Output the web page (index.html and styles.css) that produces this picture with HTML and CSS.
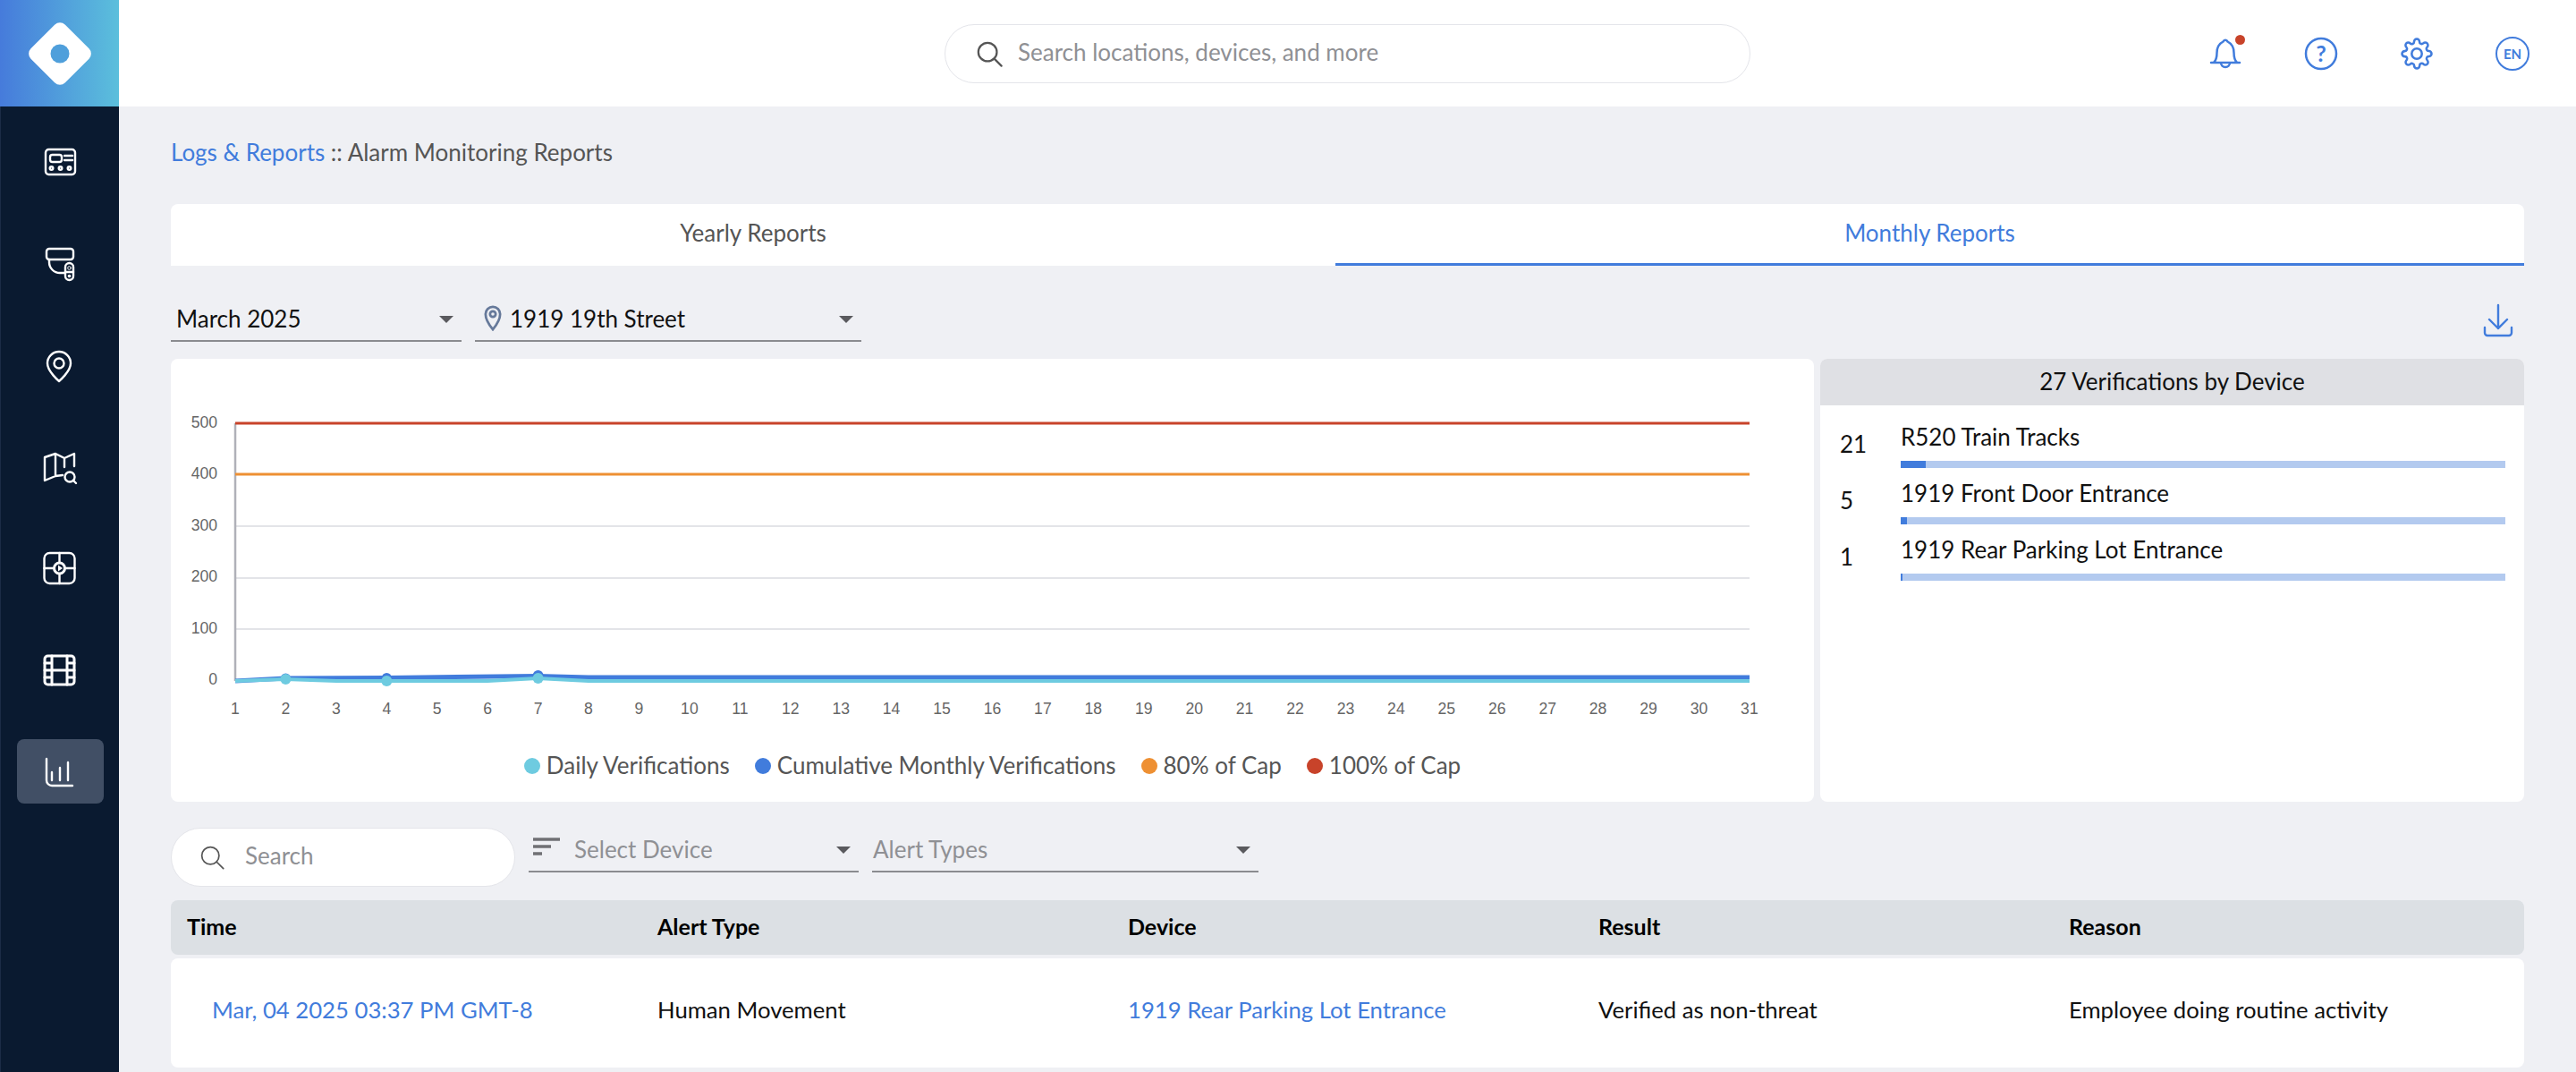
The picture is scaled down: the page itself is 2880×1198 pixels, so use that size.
FILE: index.html
```html
<!DOCTYPE html>
<html lang="en">
<head>
<meta charset="utf-8">
<title>Alarm Monitoring Reports</title>
<link rel="stylesheet" href="styles.css">
</head>
<body>
<div class="app">
  <aside class="sidebar">
    <div class="logo">
      <svg class="logo-mark" viewBox="0 0 80 80"><rect x="13" y="13" width="54" height="54" rx="8" transform="rotate(45 40 40)" fill="#fff"/><circle cx="40" cy="40" r="10.5" fill="#4f9fdb"/></svg>
    </div>
    <nav class="nav">
      <a class="nav-item"><svg class="ico" viewBox="0 0 48 48"><rect x="8" y="9" width="33" height="28" rx="3.5"/><rect x="13" y="15" width="13" height="8" rx="2.5"/><path d="M29 16h9M29 21h9"/><circle cx="14.500" cy="30" r="1.800"/><circle cx="24.500" cy="30" r="1.800"/><circle cx="34.500" cy="30" r="1.800"/></svg></a>
      <a class="nav-item"><svg class="ico" viewBox="0 0 48 48"><rect x="9" y="7" width="30" height="12" rx="3"/><path d="M12 19v3a12 12 0 0 0 12 12h5"/><rect x="30" y="23" width="9" height="19" rx="4.500"/><path d="M30 33h9"/><circle class="thin" cx="34.500" cy="28.500" r="1.800"/><circle class="solid" cx="34.500" cy="37.500" r="1.800"/></svg></a>
      <a class="nav-item"><svg class="ico" viewBox="0 0 48 48"><path d="M23 41C23 41 10 30 10 21a13 13 0 0 1 26 0C36 30 23 41 23 41Z"/><circle cx="23" cy="21" r="5.500"/></svg></a>
      <a class="nav-item"><svg class="ico" viewBox="0 0 48 48"><path d="M27 33l-8 1-12 5V13l12-4 10 5 11-5v14M19 9v25M29 14v10"/><circle cx="35" cy="35" r="5.500"/><path d="M39 39l3 3"/></svg></a>
      <a class="nav-item"><svg class="ico" viewBox="0 0 48 48"><rect x="6.500" y="7" width="34" height="34" rx="6"/><path d="M23.500 7v34M6.500 24h34"/><circle class="disc" cx="23.500" cy="24" r="6"/><path class="solid" d="M22 20.500l5 3.500-5 3.500Z"/></svg></a>
      <a class="nav-item"><svg class="ico film" viewBox="0 0 48 48"><rect x="7" y="9" width="33" height="32" rx="3.500"/><path d="M15 9v32M32 9v32M7 17h8M7 25h33M7 33h8M32 17h8M32 33h8"/></svg></a>
      <a class="nav-item active"><svg class="ico" viewBox="0 0 48 48"><path d="M9 10v24a6 6 0 0 0 6 6h23M15 25v9M24 20v14M33 14v20"/></svg></a>
    </nav>
  </aside>
  <main class="main">
    <header class="topbar">
      <div></div>
      <label class="global-search">
        <svg class="search-ico" viewBox="0 0 32 32"><circle cx="14" cy="14" r="11"/><path d="M22 22l8.500 8.500"/></svg>
        <span class="placeholder">Search locations, devices, and more</span>
      </label>
      <div class="top-actions">
        <span class="top-ico">
          <svg viewBox="0 0 48 48"><path d="M8 34h32M11 34c3-3 3.500-6 3.500-11 0-6 3-10.500 7-12.500 1-2.500 4-2.500 5 0 4 2 7 6.500 7 12.500 0 5 .5 8 3.500 11M19 34a5 5 0 0 0 10 0"/></svg>
          <i class="badge"></i>
        </span>
        <span class="top-ico">
          <svg viewBox="0 0 48 48"><circle cx="24" cy="24" r="17"/><text x="24" y="33" text-anchor="middle" class="q">?</text></svg>
        </span>
        <span class="top-ico">
          <svg viewBox="0 0 24 24" class="gear"><circle cx="12" cy="12" r="3.800"/><path d="M19.400 15a1.650 1.650 0 0 0 .33 1.820l.06.06a2 2 0 0 1 0 2.830 2 2 0 0 1-2.830 0l-.06-.06a1.650 1.650 0 0 0-1.820-.33 1.650 1.650 0 0 0-1 1.510V21a2 2 0 0 1-2 2 2 2 0 0 1-2-2v-.09A1.650 1.650 0 0 0 9 19.400a1.650 1.650 0 0 0-1.820.33l-.06.06a2 2 0 0 1-2.830 0 2 2 0 0 1 0-2.830l.06-.06a1.650 1.650 0 0 0 .33-1.820 1.650 1.650 0 0 0-1.510-1H3a2 2 0 0 1-2-2 2 2 0 0 1 2-2h.09A1.650 1.650 0 0 0 4.600 9a1.650 1.650 0 0 0-.33-1.820l-.06-.06a2 2 0 0 1 0-2.830 2 2 0 0 1 2.830 0l.06.06a1.650 1.650 0 0 0 1.820.33H9a1.650 1.650 0 0 0 1-1.510V3a2 2 0 0 1 2-2 2 2 0 0 1 2 2v.09a1.650 1.650 0 0 0 1 1.510 1.650 1.650 0 0 0 1.820-.33l.06-.06a2 2 0 0 1 2.830 0 2 2 0 0 1 0 2.830l-.06.06a1.650 1.650 0 0 0-.33 1.820V9a1.650 1.650 0 0 0 1.510 1H21a2 2 0 0 1 2 2 2 2 0 0 1-2 2h-.09a1.650 1.650 0 0 0-1.510 1z"/></svg>
        </span>
        <span class="top-ico"><span class="lang">EN</span></span>
      </div>
    </header>

    <div class="content">
      <div class="crumbs"><a class="link">Logs &amp; Reports</a> :: Alarm Monitoring Reports</div>

      <div class="tabs">
        <div class="tab">Yearly Reports</div>
        <div class="tab current">Monthly Reports</div>
      </div>

      <div class="toolbar">
        <div class="select w325"><span>March 2025</span><i class="caret"></i></div>
        <div class="select w432">
          <svg class="pin" viewBox="0 0 24 32"><path d="M12 30C12 30 3 19 3 11a9 9 0 0 1 18 0C21 19 12 30 12 30Z"/><circle cx="12" cy="11" r="3.500"/></svg>
          <span>1919 19th Street</span><i class="caret"></i>
        </div>
        <svg class="download" viewBox="0 0 48 48"><path d="M24 7v26M14 23l10 10 10-10M9 32v6a3 3 0 0 0 3 3h24a3 3 0 0 0 3-3v-6"/></svg>
      </div>

      <div class="panels">
        <section class="chart-card">
          <svg class="chart" viewBox="191 401 1837 420">
            <g class="grid">
              <path d="M263 588H1956M263 646H1956M263 703H1956"/>
            </g>
            <path class="axis" d="M263 473V761"/>
            <path class="cap100" d="M263 473H1956"/>
            <path class="cap80" d="M263 530H1956"/>
            <path class="cum" d="M263 761L319 758 432 757.500 601 755.500 658 757H1956"/>
            <circle class="cum-dot" cx="319.400" cy="758" r="5.500"/>
            <circle class="cum-dot" cx="432.300" cy="757.500" r="5.500"/>
            <circle class="cum-dot" cx="601.600" cy="755" r="6"/>
            <path class="daily" d="M263 761L319 759 376 761H545L601 758 658 761H1956"/>
            <circle class="daily-dot" cx="319.400" cy="759" r="6"/>
            <circle class="daily-dot" cx="432.300" cy="761" r="6"/>
            <circle class="daily-dot" cx="601.600" cy="758" r="6"/>
            <g class="ylabels">
              <text x="243" y="478">500</text>
              <text x="243" y="535">400</text>
              <text x="243" y="593">300</text>
              <text x="243" y="650">200</text>
              <text x="243" y="708">100</text>
              <text x="243" y="765">0</text>
            </g>
            <g class="xlabels">
              <text x="263" y="798">1</text><text x="319.400" y="798">2</text><text x="375.900" y="798">3</text><text x="432.300" y="798">4</text><text x="488.700" y="798">5</text><text x="545.200" y="798">6</text><text x="601.600" y="798">7</text><text x="658" y="798">8</text><text x="714.400" y="798">9</text><text x="770.900" y="798">10</text><text x="827.300" y="798">11</text><text x="883.700" y="798">12</text><text x="940.200" y="798">13</text><text x="996.600" y="798">14</text><text x="1053" y="798">15</text><text x="1109.500" y="798">16</text><text x="1165.900" y="798">17</text><text x="1222.300" y="798">18</text><text x="1278.700" y="798">19</text><text x="1335.200" y="798">20</text><text x="1391.600" y="798">21</text><text x="1448" y="798">22</text><text x="1504.500" y="798">23</text><text x="1560.900" y="798">24</text><text x="1617.300" y="798">25</text><text x="1673.800" y="798">26</text><text x="1730.200" y="798">27</text><text x="1786.600" y="798">28</text><text x="1843" y="798">29</text><text x="1899.500" y="798">30</text><text x="1955.900" y="798">31</text>
            </g>
          </svg>
          <div class="legend">
            <span class="key"><i class="dot dot-daily"></i>Daily Verifications</span>
            <span class="key"><i class="dot dot-cum"></i>Cumulative Monthly Verifications</span>
            <span class="key"><i class="dot dot-80"></i>80% of Cap</span>
            <span class="key"><i class="dot dot-100"></i>100% of Cap</span>
          </div>
        </section>
        <section class="device-card">
          <h2 class="device-head">27 Verifications by Device</h2>
          <div class="device-list">
            <div class="device"><span class="count">21</span><div class="device-body"><div class="device-name">R520 Train Tracks</div><div class="bar"><i class="fill" style="width:28px"></i></div></div></div>
            <div class="device"><span class="count">5</span><div class="device-body"><div class="device-name">1919 Front Door Entrance</div><div class="bar"><i class="fill" style="width:7px"></i></div></div></div>
            <div class="device"><span class="count">1</span><div class="device-body"><div class="device-name">1919 Rear Parking Lot Entrance</div><div class="bar"><i class="fill" style="width:2px"></i></div></div></div>
          </div>
        </section>
      </div>

      <div class="filters">
        <label class="local-search">
          <svg class="search-ico small" viewBox="0 0 32 32"><circle cx="14" cy="14" r="11"/><path d="M22 22l8.500 8.500"/></svg>
          <span class="placeholder">Search</span>
        </label>
        <div class="select w369 muted">
          <svg class="sort" viewBox="0 0 30 20"><path d="M0 2h30M0 10h20M0 18h10"/></svg>
          <span>Select Device</span><i class="caret"></i>
        </div>
        <div class="select w432 muted tight"><span>Alert Types</span><i class="caret"></i></div>
      </div>

      <div class="thead">
        <div>Time</div><div>Alert Type</div><div>Device</div><div>Result</div><div>Reason</div>
      </div>
      <div class="trow">
        <div class="link indent">Mar, 04 2025 03:37 PM GMT-8</div>
        <div>Human Movement</div>
        <div class="link">1919 Rear Parking Lot Entrance</div>
        <div>Verified as non-threat</div>
        <div>Employee doing routine activity</div>
      </div>
    </div>
  </main>
</div>
</body>
</html>
```
FILE: styles.css
```css
* { box-sizing: border-box; }
html, body { margin: 0; height: 100%; }
body {
  height: 1198px;
  overflow: hidden;
  background: #eff0f4;
  font-family: "Lato", "Noto Sans", sans-serif;
  font-size: 26px;
  color: #111;
}
.app { display: flex; height: 1198px; }

/* sidebar */
.sidebar { width: 133px; flex: none; background: #0a1a30; border-left: 1px solid #1c2c46; }
.logo {
  height: 119px;
  margin-left: -1px;
  display: flex;
  align-items: center;
  justify-content: center;
  background: linear-gradient(90deg, #467bdb, #5bbfdc);
}
.logo-mark { width: 80px; height: 80px; }
.nav { display: flex; flex-direction: column; align-items: center; gap: 41.3px; padding-top: 27px; }
.nav-item { width: 97px; height: 72px; border-radius: 8px; display: flex; align-items: center; justify-content: center; }
.nav-item.active { background: #414f65; }
.ico { width: 48px; height: 48px; fill: none; stroke: #fff; stroke-width: 2.4; stroke-linecap: round; stroke-linejoin: round; }
.ico.film { stroke-width: 3; }
.ico .solid { fill: #fff; stroke: none; }
.ico .thin { stroke-width: 1; }
.ico .disc { fill: #0a1a30; stroke-width: 3; }

/* top bar */
.main { flex: 1; min-width: 0; }
.topbar {
  height: 119px;
  background: #fff;
  display: grid;
  grid-template-columns: 1fr 901px 1fr;
  align-items: center;
  padding-right: 47px;
  padding-left: 47px;
}
.global-search {
  height: 66px;
  display: flex;
  align-items: center;
  gap: 17px;
  padding-left: 34px;
  border: 1px solid #e4e5ea;
  border-radius: 33px;
  background: #fff;
}
.placeholder { color: #8f9094; padding-bottom: 3px; }
.local-search .placeholder { padding-bottom: 5px; }
.search-ico { width: 30px; height: 30px; fill: none; stroke: #555; stroke-width: 2.4; stroke-linecap: round; }
.search-ico.small { width: 28px; height: 28px; stroke-width: 2; }
.top-actions { display: flex; justify-content: flex-end; gap: 59px; }
.top-ico { position: relative; width: 48px; height: 48px; display: flex; align-items: center; justify-content: center; }
.top-ico svg { width: 48px; height: 48px; fill: none; stroke: #417cdc; stroke-width: 2.5; stroke-linecap: round; stroke-linejoin: round; }
.top-ico svg.gear { width: 36px; height: 36px; stroke-width: 1.7; }
.top-ico .q { fill: #417cdc; stroke: none; font: 700 25px "Lato", sans-serif; }
.badge { position: absolute; left: 35px; top: 3px; width: 11px; height: 11px; border-radius: 50%; background: #c8432a; }
.lang {
  width: 38px; height: 38px; border: 2px solid #417cdc; border-radius: 50%;
  display: flex; align-items: center; justify-content: center;
  color: #417cdc; font-size: 15px; font-weight: 700;
}

/* content */
.content { padding: 35px 58px 0; }
.link { color: #417cdc; }
.crumbs { height: 36px; line-height: 33px; color: #555; }
.tabs { margin-top: 38px; height: 69px; display: grid; grid-template-columns: 1302px 1fr; background: #fff; border-radius: 8px 8px 0 0; }
.tab { display: flex; align-items: center; justify-content: center; color: #555; padding-bottom: 5px; }
.tab.current { color: #417cdc; border-bottom: 3px solid #417cdc; padding-bottom: 2px; }

.toolbar { display: flex; gap: 15px; padding-top: 37px; height: 104px; align-items: flex-start; }
.select {
  position: relative;
  height: 48px;
  display: flex;
  align-items: center;
  padding-left: 6px;
  border-bottom: 2px solid #8a8b8f;
}
.select span { padding-bottom: 3px; }
.select.tight { padding-left: 1px; }
.w325 { width: 325px; }
.w369 { width: 369px; }
.w432 { width: 432px; }
.caret {
  position: absolute;
  right: 9px;
  top: 19px;
  width: 0;
  height: 0;
  border-left: 8px solid transparent;
  border-right: 8px solid transparent;
  border-top: 8px solid #5a5a5e;
}
.pin { width: 22px; height: 29px; margin: 0 8px 3px 3px; fill: none; stroke: #66799a; stroke-width: 3; }
.download { margin-left: auto; margin-right: 5px; width: 48px; height: 48px; fill: none; stroke: #417cdc; stroke-width: 2.4; stroke-linecap: round; stroke-linejoin: round; }
.muted { color: #8f9094; }
.sort { width: 30px; height: 20px; margin: 0 16px 8px -1px; fill: none; stroke: #707074; stroke-width: 3.5; }

/* chart */
.panels { display: flex; gap: 7px; height: 495px; }
.chart-card { width: 1837px; background: #fff; border-radius: 8px; }
.chart { display: block; width: 1837px; height: 420px; }
.chart .grid { stroke: #e3e4e8; stroke-width: 2; fill: none; }
.axis { stroke: #b0b1b8; stroke-width: 2.5; fill: none; }
.cap100 { stroke: #c8432a; stroke-width: 3; fill: none; }
.cap80 { stroke: #ee9033; stroke-width: 3; fill: none; }
.cum { stroke: #417cdc; stroke-width: 5; fill: none; }
.daily { stroke: #6ecbe0; stroke-width: 4; fill: none; }
.cum-dot { fill: #417cdc; }
.daily-dot { fill: #6ecbe0; }
.ylabels text { font: 17.6px "Liberation Sans", sans-serif; fill: #666; text-anchor: end; }
.xlabels text { font: 17.6px "Liberation Sans", sans-serif; fill: #666; text-anchor: middle; }
.legend { display: flex; justify-content: center; gap: 28px; padding-top: 16px; color: #555; line-height: 36px; }
.key { display: inline-flex; align-items: center; gap: 7px; }
.dot { width: 18px; height: 18px; border-radius: 50%; margin-top: 2px; }
.dot-daily { background: #6ecbe0; }
.dot-cum { background: #417cdc; }
.dot-80 { background: #ee9033; }
.dot-100 { background: #c8432a; }

/* device list */
.device-card { flex: 1; background: #fff; border-radius: 8px; overflow: hidden; }
.device-head { margin: 0; height: 52px; padding-bottom: 3px; background: #dfe0e4; font: inherit; display: flex; align-items: center; justify-content: center; }
.device-list { display: flex; flex-direction: column; gap: 12px; padding: 19px 21px 0 22px; }
.device { display: flex; align-items: center; height: 51px; }
.count { width: 68px; flex: none; padding-bottom: 3px; }
.device-body { flex: 1; }
.device-name { line-height: 33px; padding-bottom: 3px; margin-bottom: 7px; }
.bar { height: 8px; background: #b3caef; }
.fill { display: block; height: 100%; background: #417cdc; }

/* filters + table */
.filters { display: flex; gap: 15px; align-items: flex-start; padding-top: 29px; height: 110px; }
.local-search {
  width: 385px; height: 66px; border-radius: 33px; background: #fff; border: 1px solid #e4e5ea;
  display: flex; align-items: center; gap: 23px; padding-left: 31px;
}
.filters .select { margin-top: 2px; }
.thead, .trow { display: grid; grid-template-columns: repeat(4, 526px) 1fr; padding-left: 18px; align-items: center; }
.thead { height: 61px; padding-bottom: 3px; background: #dce0e4; border-radius: 8px; font-size: 25px; font-weight: 700; color: #000; }
.trow { margin-top: 4px; height: 122px; padding-bottom: 9px; background: #fff; border-radius: 8px; font-size: 25.7px; }
.indent { padding-left: 28px; }
```
